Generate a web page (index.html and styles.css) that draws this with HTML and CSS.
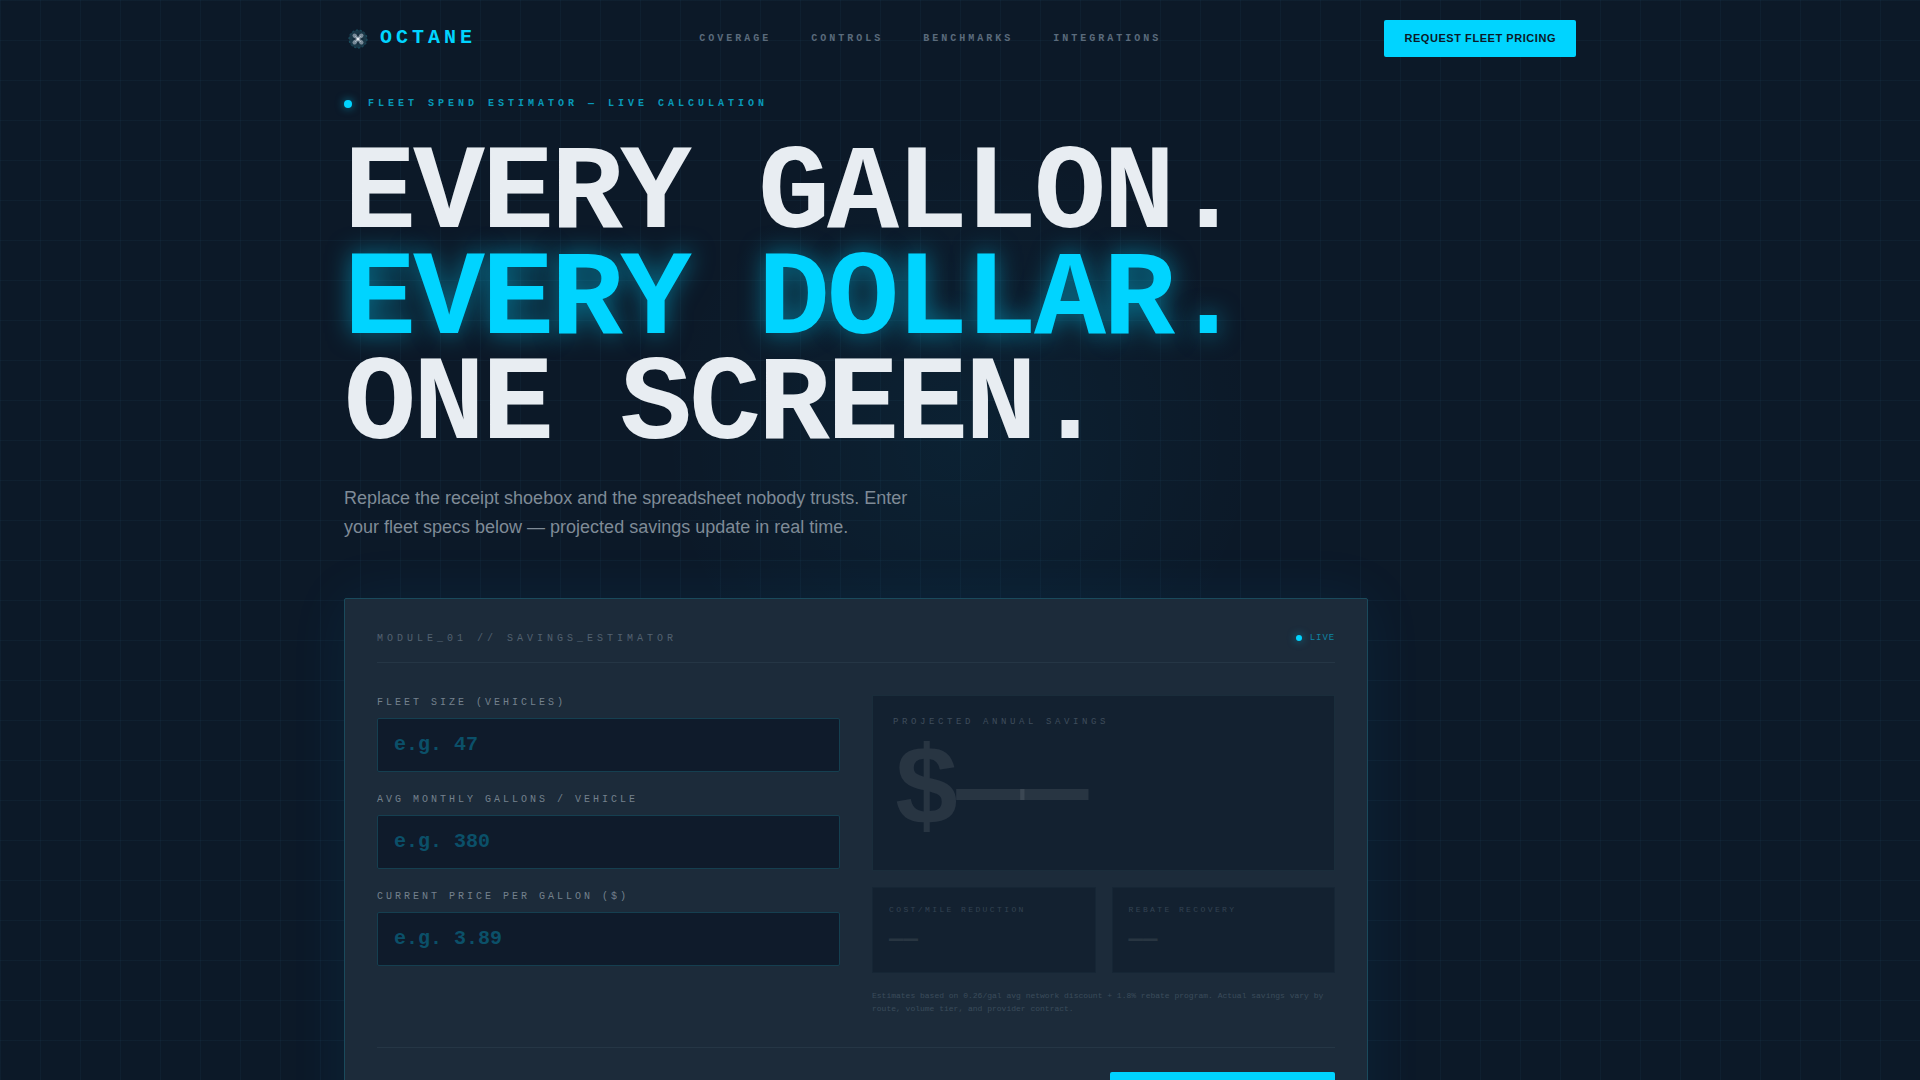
FILE: index.html
```html
<!DOCTYPE html>
<html lang="en">
<head>
    <meta charset="UTF-8">
    <meta name="viewport" content="width=device-width, initial-scale=1.0">
    <title>Octane - Fleet Spend Estimator</title>
    <link rel="stylesheet" href="styles.css">
</head>
<body>
    <header class="nav container">
        <a href="#" class="logo">
            <svg width="28" height="28" viewBox="0 0 28 28" fill="none" aria-hidden="true">
                <circle cx="14" cy="14" r="9" fill="#1a3848"/>
                <circle cx="14" cy="14" r="9" stroke="#1c5566" stroke-dasharray="2 2"/>
                <path d="M10.5 10.5l7 7M17.5 10.5l-7 7" stroke="#788a98" stroke-width="4" stroke-linecap="round"/>
                <path d="M14 8.5v3M14 16.5v3M8.5 14h3M16.5 14h3" stroke="#142a3a" stroke-width="1.5"/>
                <path d="M11 11l6 6M17 11l-6 6" stroke="#a5b3be" stroke-width="1"/>
                <circle cx="14" cy="14" r="1.5" fill="#e8edf2"/>
            </svg>
            <span>OCTANE</span>
        </a>
        <nav class="nav-links">
            <a href="#coverage">COVERAGE</a>
            <a href="#controls">CONTROLS</a>
            <a href="#benchmarks">BENCHMARKS</a>
            <a href="#integrations">INTEGRATIONS</a>
        </nav>
        <button type="button" class="btn">REQUEST FLEET PRICING</button>
    </header>

    <main class="hero container">
        <p class="eyebrow"><span class="dot"></span>FLEET SPEND ESTIMATOR — LIVE CALCULATION</p>
        <h1>EVERY GALLON.<br><span class="glow">EVERY DOLLAR.</span><br>ONE SCREEN.</h1>
        <p class="lead">Replace the receipt shoebox and the spreadsheet nobody trusts. Enter your fleet specs below — projected savings update in real time.</p>

        <form class="card">
            <div class="card-head">
                <span class="module">MODULE_01 // SAVINGS_ESTIMATOR</span>
                <span class="live"><span class="dot dot-small"></span>LIVE</span>
            </div>

            <div class="card-body">
                <div class="fields">
                    <div class="field">
                        <label for="fleet">FLEET SIZE (VEHICLES)</label>
                        <input type="text" inputmode="numeric" id="fleet" placeholder="e.g. 47">
                    </div>
                    <div class="field">
                        <label for="gallons">AVG MONTHLY GALLONS / VEHICLE</label>
                        <input type="text" inputmode="numeric" id="gallons" placeholder="e.g. 380">
                    </div>
                    <div class="field">
                        <label for="price">CURRENT PRICE PER GALLON ($)</label>
                        <input type="text" inputmode="decimal" id="price" placeholder="e.g. 3.89">
                    </div>
                </div>

                <div class="results">
                    <div class="total">
                        <div class="total-label">PROJECTED ANNUAL SAVINGS</div>
                        <output class="total-value">$——</output>
                    </div>
                    <div class="stats">
                        <div class="stat">
                            <div class="stat-label">COST/MILE REDUCTION</div>
                            <output class="stat-value">——</output>
                        </div>
                        <div class="stat">
                            <div class="stat-label">REBATE RECOVERY</div>
                            <output class="stat-value">——</output>
                        </div>
                    </div>
                    <p class="note">Estimates based on 0.26/gal avg network discount + 1.8% rebate program. Actual savings vary by route, volume tier, and provider contract.</p>
                </div>
            </div>

            <div class="card-foot">
                <button type="button" class="btn btn-large">REQUEST FLEET PRICING</button>
            </div>
        </form>
    </main>
</body>
</html>
```

FILE: styles.css
```css
* {
    box-sizing: border-box;
}
body {
    margin: 0;
    font-family: "Liberation Sans", Arial, sans-serif;
    color: #e8edf2;
    background-color: #0c1928;
    background-image:
        linear-gradient(rgba(80, 200, 255, 0.04) 1px, transparent 1px),
        linear-gradient(90deg, rgba(80, 200, 255, 0.04) 1px, transparent 1px),
        radial-gradient(circle 300px at 960px 440px, rgba(0, 190, 255, 0.05), transparent);
    background-size: 40px 40px, 40px 40px, auto;
}
.container {
    max-width: 1280px;
    margin: 0 auto;
    padding-left: 24px;
    padding-right: 24px;
}
a {
    color: inherit;
    text-decoration: none;
}

/* top bar */
.nav {
    display: flex;
    align-items: center;
    justify-content: space-between;
    padding-top: 20px;
    padding-bottom: 20px;
}
.logo {
    display: flex;
    align-items: center;
    gap: 8px;
    font: bold 20px/26px "Liberation Mono", monospace;
    letter-spacing: 0.2em;
    color: #00d4ff;
}
.logo span {
    padding-bottom: 2px;
}
.nav-links {
    display: flex;
    gap: 40px;
    font: bold 10px "Liberation Mono", monospace;
    letter-spacing: 0.3em;
    color: #5b6b7c;
}
.btn {
    padding: 12px 20px;
    border: none;
    border-radius: 2px;
    background: #00d4ff;
    color: #0c1928;
    font: bold 11px/13px "Liberation Sans", Arial, sans-serif;
    letter-spacing: 0.05em;
    cursor: pointer;
}

/* hero */
.hero {
    padding-top: 20px;
    padding-bottom: 80px;
}
.eyebrow {
    display: flex;
    align-items: center;
    gap: 16px;
    margin: 0 0 32px;
    font: bold 10px/14px "Liberation Mono", monospace;
    letter-spacing: 0.4em;
    color: #0899ba;
}
.dot {
    width: 8px;
    height: 8px;
    border-radius: 50%;
    background: #00d4ff;
    box-shadow: 0 0 8px rgba(0, 212, 255, 0.6);
}
.dot-small {
    width: 6px;
    height: 6px;
}
h1 {
    margin: 0 0 24px;
    font: bold 120px/0.88 "Liberation Mono", monospace;
    letter-spacing: -0.025em;
}
.glow {
    color: #00d4ff;
    text-shadow: 0 0 24px rgba(0, 212, 255, 0.5);
}
.lead {
    max-width: 576px;
    margin: 0 0 56px;
    font-size: 18px;
    line-height: 29px;
    color: #7f8b97;
}

/* estimator card */
.card {
    max-width: 1024px;
    padding: 32px;
    border: 1px solid #1a4a5c;
    border-radius: 2px;
    background: #1c2b3a;
    box-shadow: 0 0 60px rgba(0, 150, 255, 0.08);
}
.card-head {
    display: flex;
    align-items: center;
    justify-content: space-between;
    padding-bottom: 16px;
    margin-bottom: 32px;
    border-bottom: 1px solid #253645;
    font: 10px/15px "Liberation Mono", monospace;
}
.module {
    letter-spacing: 0.4em;
    color: #526170;
}
.live {
    display: flex;
    align-items: center;
    gap: 8px;
    font-size: 9px;
    letter-spacing: 0.1em;
    color: #0f84a2;
}
.card-body {
    display: grid;
    grid-template-columns: 1fr 1fr;
    gap: 32px;
}
.fields {
    display: flex;
    flex-direction: column;
    gap: 20px;
}
.field label {
    display: block;
    margin-bottom: 8px;
    font: 10px/15px "Liberation Mono", monospace;
    letter-spacing: 0.3em;
    color: #74818d;
}
.field input {
    display: block;
    width: 100%;
    height: 54px;
    padding: 0 16px;
    border: 1px solid #153f50;
    border-radius: 2px;
    outline: none;
    background: #0f1b2b;
    color: #00d4ff;
    font: bold 20px "Liberation Mono", monospace;
}
.field input::placeholder {
    color: #0b5069;
    opacity: 1;
}
.field input:focus {
    border-color: #00d4ff;
}
.results {
    display: flex;
    flex-direction: column;
    gap: 16px;
    font-family: "Liberation Mono", monospace;
}
.total {
    padding: 20px;
    border: 1px solid #1a2d3b;
    background: #132130;
}
.total-label {
    margin-bottom: 10px;
    font-size: 9px;
    line-height: 12px;
    letter-spacing: 0.4em;
    color: #3f4d5c;
}
.total-value {
    display: block;
    font-size: 112px;
    font-weight: bold;
    line-height: 1;
    letter-spacing: -0.03em;
    color: rgba(255, 255, 255, 0.09);
}
.stats {
    display: grid;
    grid-template-columns: 1fr 1fr;
    gap: 16px;
}
.stat {
    padding: 16px;
    border: 1px solid #162635;
    background: #132130;
}
.stat-label {
    margin-bottom: 8px;
    font-size: 8px;
    line-height: 12px;
    letter-spacing: 0.3em;
    color: #344352;
}
.stat-value {
    display: block;
    font-size: 24px;
    font-weight: bold;
    line-height: 32px;
    color: #283541;
}
.note {
    margin: 0;
    font-size: 8px;
    line-height: 13px;
    color: #3b4b5a;
}
.card-foot {
    display: flex;
    justify-content: flex-end;
    margin-top: 32px;
    padding-top: 24px;
    border-top: 1px solid #253645;
}
.btn-large {
    padding: 16px 30px;
    font-size: 12px;
}
```
